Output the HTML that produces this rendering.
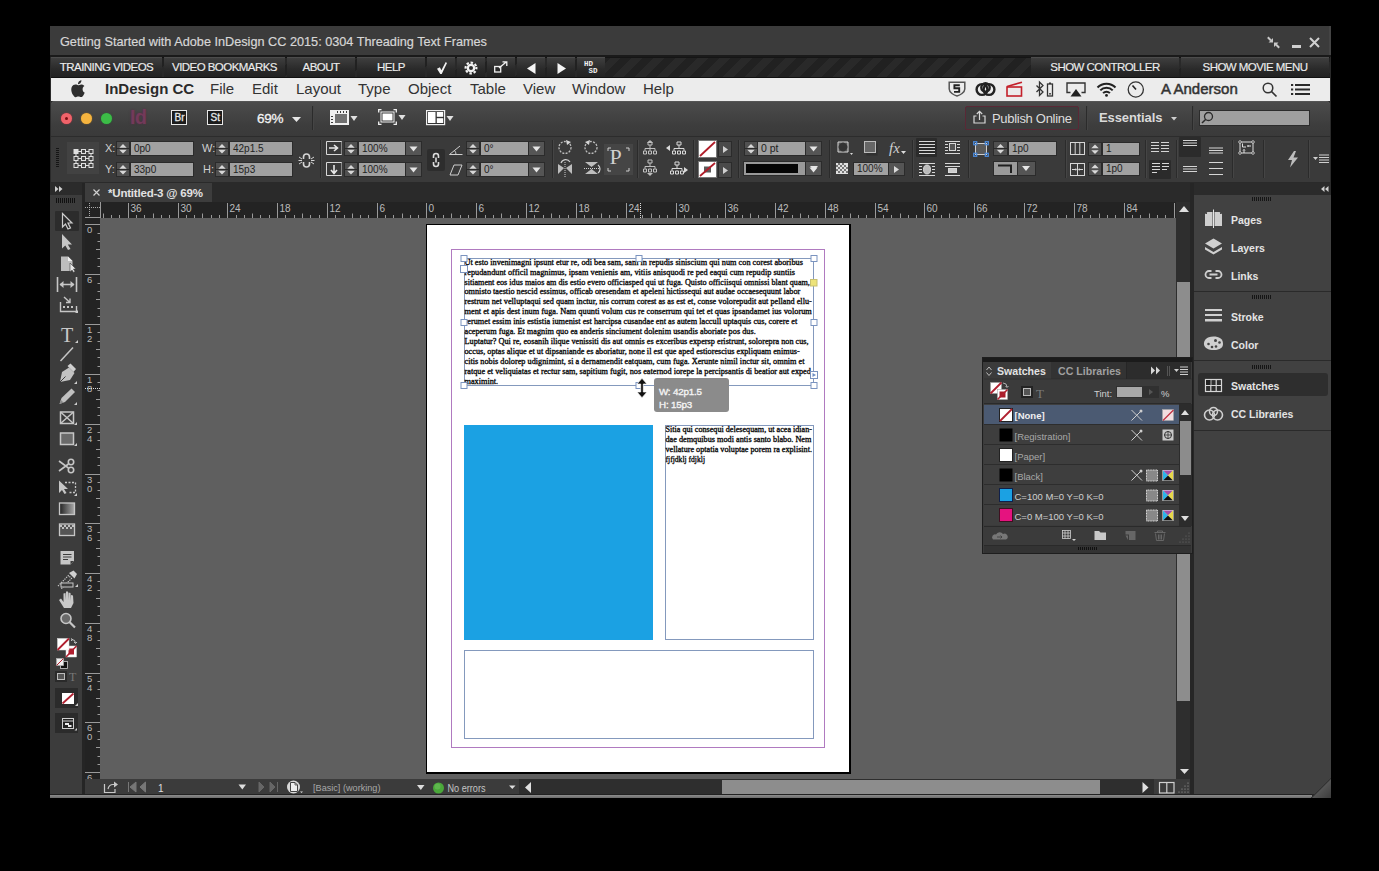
<!DOCTYPE html>
<html><head><meta charset="utf-8">
<style>
*{margin:0;padding:0;box-sizing:border-box}
html,body{width:1379px;height:871px;background:#000;overflow:hidden;font-family:"Liberation Sans",sans-serif;position:relative}
.a{position:absolute}
.t{position:absolute;white-space:nowrap;line-height:1}
svg{position:absolute;overflow:visible;z-index:1}
.nav{position:absolute;top:57px;height:20px;background:linear-gradient(#404040,#2a2a2a 60%,#222);color:#ececec;font-size:11.5px;letter-spacing:-0.55px;-webkit-text-stroke:0.15px #ececec;text-align:center;line-height:21px;box-shadow:inset 0 1px 0 #4c4c4c}
.ic{position:absolute;top:57px;height:20px;width:28px;background:linear-gradient(#404040,#2a2a2a 60%,#222);box-shadow:inset 0 1px 0 #4c4c4c}
.mi{position:absolute;top:81px;font-size:15px;color:#333;line-height:16px;white-space:nowrap}
.field{position:absolute;background:#a1a1a1;color:#222;font-size:10px;line-height:13px;padding-left:3px;box-shadow:0 0 0 1px #2b2b2b;white-space:nowrap}
.spin{position:absolute;background:linear-gradient(#505050 0 46%,#2b2b2b 46% 54%,#505050 54%);box-shadow:0 0 0 1px #2b2b2b}
.dd{position:absolute;background:#555;box-shadow:0 0 0 1px #2b2b2b}
.lbl{position:absolute;color:#d0d0d0;font-size:11px;line-height:11px;white-space:nowrap}
.sep{position:absolute;width:1px;background:#2b2b2b;box-shadow:1px 0 0 #454545}
</style></head><body>
<!-- window base -->
<div class="a" style="left:50px;top:26px;width:1281px;height:772px;background:#2a2a2a"></div>
<!-- title bar -->
<div class="a" style="left:50px;top:26px;width:1281px;height:30px;background:#3b3b3b;box-shadow:inset -2px 0 0 #444"></div><div class="a" style="left:50px;top:55px;width:1281px;height:2px;background:#1a1a1a"></div>
<div class="t" style="left:60px;top:35.8px;color:#d6d6d6;font-size:12.7px;-webkit-text-stroke:0.2px #d6d6d6">Getting Started with Adobe InDesign CC 2015: 0304 Threading Text Frames</div>
<svg style="left:1267px;top:37px" width="13" height="11" viewBox="0 0 13 11"><g fill="#c8c8c8"><path d="M6 5.5 V1 L1.5 5.5 Z M7 5.5 H11.5 L7 10 Z"/></g><path d="M0.8 0.3 L4 3.5 M12.2 10.7 L9 7.5" stroke="#c8c8c8" stroke-width="2"/></svg>
<div class="a" style="left:1292px;top:45px;width:9px;height:2.5px;background:#cfcfcf"></div>
<svg style="left:1309px;top:37px" width="11" height="11" viewBox="0 0 11 11"><path d="M1 1 L10 10 M10 1 L1 10" stroke="#d0d0d0" stroke-width="2"/></svg>
<!-- nav strip -->
<div class="a" style="left:51px;top:57px;width:1279px;height:21px;background:repeating-linear-gradient(135deg,#212121 0 7.8px,#292929 7.8px 15.5px);border-top:1px solid #151515;border-bottom:1px solid #111"></div>
<div class="nav" style="left:51px;width:111px">TRAINING VIDEOS</div>
<div class="nav" style="left:164px;width:121px">VIDEO BOOKMARKS</div>
<div class="nav" style="left:287px;width:68px">ABOUT</div>
<div class="nav" style="left:357px;width:68px">HELP</div>
<div class="ic" style="left:427px"></div>
<div class="ic" style="left:457px"></div>
<div class="ic" style="left:487px"></div>
<div class="ic" style="left:517px"></div>
<div class="ic" style="left:547px"></div>
<div class="ic" style="left:577px"></div>
<svg style="left:436.5px;top:62px" width="10" height="12" viewBox="0 0 11 13"><path d="M0 7.2 L3.2 5.8 L4.8 9 L9.6 0 L11 1 L5.2 13 H3.6 Z" fill="#f2f2f2"/></svg>
<svg style="left:464px;top:61px" width="14" height="14" viewBox="0 0 14 14"><circle cx="7" cy="7" r="4.3" fill="#f2f2f2"/><circle cx="7" cy="7" r="5.4" fill="none" stroke="#f2f2f2" stroke-width="2.2" stroke-dasharray="2.4 1.84" transform="rotate(-11 7 7)"/><circle cx="7" cy="7" r="2" fill="#2c2c2c"/></svg>
<svg style="left:494px;top:61px" width="14" height="12" viewBox="0 0 14 12"><g fill="none" stroke="#f2f2f2" stroke-width="1.3"><rect x="0.7" y="5.5" width="6" height="5.5"/><path d="M5 7 L12.5 0.8 M8.5 0.8 H12.8 V5"/></g></svg>
<svg style="left:527px;top:62.5px" width="9" height="11" viewBox="0 0 9 11"><path d="M8.5 0 V11 L0 5.5 Z" fill="#f4f4f4"/></svg>
<svg style="left:557px;top:62.5px" width="9" height="11" viewBox="0 0 9 11"><path d="M0.5 0 V11 L9 5.5 Z" fill="#f4f4f4"/></svg>
<div class="t" style="left:584px;top:61px;color:#f0f0f0;font-size:7.5px;font-weight:bold;line-height:7px;font-family:'Liberation Mono',monospace">HD<br>&nbsp;SD</div>
<div class="nav" style="left:1031px;width:148px">SHOW CONTROLLER</div>
<div class="nav" style="left:1181px;width:148px">SHOW MOVIE MENU</div>
<!-- menu bar -->
<div class="a" style="left:51px;top:78px;width:1279px;height:23px;background:#ececec"></div>
<svg style="left:71px;top:80px" width="14" height="17" viewBox="0 0 14 17"><path fill="#2e2e2e" d="M11.6 9.1c0-2 1.7-3 1.8-3.1-1-1.4-2.5-1.6-3-1.6-1.3-.1-2.5.8-3.2.8-.7 0-1.7-.8-2.8-.7C3 4.5 1.7 5.3 1 6.6c-1.5 2.6-.4 6.4 1.1 8.5.7 1 1.5 2.2 2.6 2.1 1-.04 1.4-.7 2.7-.7 1.2 0 1.6.7 2.7.6 1.1 0 1.8-1 2.5-2.1.8-1.2 1.1-2.300 1.100-2.400-.02 0-2.100-.8-2.100-3.200zM9.5 3c.6-.7 1-1.7.9-2.700-.8 0-1.900.6-2.500 1.300-.5.6-1 1.600-.9 2.600.9.1 1.900-.5 2.500-1.200z"/></svg>
<div class="mi" style="left:105px;font-weight:bold;color:#2a2a2a">InDesign CC</div>
<div class="mi" style="left:210px">File</div>
<div class="mi" style="left:252px">Edit</div>
<div class="mi" style="left:296px">Layout</div>
<div class="mi" style="left:358px">Type</div>
<div class="mi" style="left:408px">Object</div>
<div class="mi" style="left:470px">Table</div>
<div class="mi" style="left:523px">View</div>
<div class="mi" style="left:572px">Window</div>
<div class="mi" style="left:643px">Help</div>
<div class="mi" style="left:1161px;font-size:15px;top:81px;color:#333;-webkit-text-stroke:0.5px #333">A Anderson</div>
<!-- menu extras -->
<svg style="left:948px;top:81px" width="18" height="16" viewBox="0 0 18 16"><path d="M1.2 1.2 H16.8 V8 C16.8 11.5 12 14.2 9 15 C6 14.2 1.2 11.5 1.2 8 Z" fill="none" stroke="#555" stroke-width="1.5"/><path d="M11.8 4.2 H6.4 V7.3 H11.2 V10.9 H6" fill="none" stroke="#222" stroke-width="1.9"/></svg>
<svg style="left:975px;top:82px" width="21" height="15" viewBox="0 0 21 15"><g fill="none" stroke="#222" stroke-width="2.4"><circle cx="7" cy="7.5" r="5.4"/><circle cx="14" cy="7.5" r="5.4"/><circle cx="10.5" cy="5.5" r="4.2"/></g></svg>
<svg style="left:1006px;top:81px" width="18" height="16" viewBox="0 0 18 16"><g fill="none" stroke="#c4202a" stroke-width="1.6"><rect x="1" y="6" width="14.5" height="9"/><path d="M1 5.5 L16 1.2"/></g></svg>
<svg style="left:1035px;top:81px" width="20" height="16" viewBox="0 0 20 16"><path d="M1.5 4.5 L8 11 L4.5 14.5 V1 L8 4.5 L1.5 11" fill="none" stroke="#333" stroke-width="1.3"/><rect x="12.5" y="3" width="5" height="12" fill="none" stroke="#333" stroke-width="1.3"/><rect x="14" y="1.5" width="2" height="1.5" fill="#333"/><rect x="14.2" y="12" width="1.6" height="1.6" fill="#333"/></svg>
<svg style="left:1066px;top:82px" width="20" height="15" viewBox="0 0 20 15"><path d="M4.5 10.5 H1 V1 H19 V10.5 H15.5" fill="none" stroke="#333" stroke-width="1.4"/><path d="M10 7 L15.5 14.5 H4.5 Z" fill="#222"/></svg>
<svg style="left:1096px;top:82px" width="21" height="15" viewBox="0 0 21 15"><g fill="none" stroke="#222" stroke-width="2"><path d="M1.5 5.5 A12.5 12.5 0 0 1 19.5 5.5"/><path d="M4.3 8.4 A8.5 8.5 0 0 1 16.7 8.4"/><path d="M7.1 11.2 A4.5 4.5 0 0 1 13.9 11.2"/></g><circle cx="10.5" cy="13.4" r="1.4" fill="#222"/></svg>
<svg style="left:1127px;top:81px" width="18" height="17" viewBox="0 0 18 17"><circle cx="8.8" cy="8.5" r="7.6" fill="none" stroke="#333" stroke-width="1.3"/><path d="M5.5 4.5 L9 8.5" stroke="#222" stroke-width="1.7"/></svg>
<svg style="left:1262px;top:82px" width="16" height="16" viewBox="0 0 16 16"><circle cx="6" cy="6" r="4.8" fill="none" stroke="#333" stroke-width="1.5"/><path d="M9.5 9.5 L14.5 14.5" stroke="#333" stroke-width="1.7"/></svg>
<svg style="left:1291px;top:84px" width="19" height="11" viewBox="0 0 19 11"><g fill="#2a2a2a"><rect x="0" y="0" width="2.2" height="2"/><rect x="0" y="4.5" width="2.2" height="2"/><rect x="0" y="9" width="2.2" height="2"/><rect x="4" y="0" width="15" height="2"/><rect x="4" y="4.5" width="15" height="2"/><rect x="4" y="9" width="15" height="2"/></g></svg>

<!-- app bar -->
<div class="a" style="left:51px;top:101px;width:1279px;height:35px;background:linear-gradient(#4c4c4c,#3d3d3d 70%,#3a3a3a);border-radius:4px 4px 0 0;box-shadow:inset 0 1px 0 #555"></div>
<div class="a" style="left:61px;top:113px;width:11px;height:11px;border-radius:50%;background:#f0636a;box-shadow:0 0 1.5px #b03040"></div>
<div class="a" style="left:65px;top:117px;width:3px;height:3px;border-radius:50%;background:#7a0e12"></div>
<div class="a" style="left:81px;top:113px;width:11px;height:11px;border-radius:50%;background:#f5b43f;box-shadow:0 0 1.5px #a07020"></div>
<div class="a" style="left:101px;top:113px;width:11px;height:11px;border-radius:50%;background:#3cbc47;box-shadow:0 0 1.5px #207030"></div>
<div class="t" style="left:130px;top:108px;font-size:19.5px;font-weight:bold;color:#733a5a;letter-spacing:-0.3px;text-shadow:0 0 2px #5a2a45">Id</div>
<div class="a" style="left:171px;top:110px;width:16px;height:15px;border:1.3px solid #e8e8e8;background:#1c1c1c"></div>
<div class="t" style="left:174.5px;top:112.5px;font-size:10px;color:#e6e6e6;-webkit-text-stroke:0.3px #e6e6e6">Br</div>
<div class="a" style="left:207px;top:110px;width:16px;height:15px;border:1.3px solid #e8e8e8;background:#1c1c1c"></div>
<div class="t" style="left:210.5px;top:112.5px;font-size:10px;color:#e6e6e6;-webkit-text-stroke:0.3px #e6e6e6">St</div>
<div class="t" style="left:257px;top:112px;font-size:13.5px;color:#f2f2f2;letter-spacing:-0.3px;-webkit-text-stroke:0.3px #f2f2f2">69%</div>
<svg style="left:292px;top:117px" width="9" height="5" viewBox="0 0 9 5"><path d="M0 0 H9 L4.5 5 Z" fill="#e6e6e6"/></svg>
<div class="sep" style="left:312px;top:106px;height:24px"></div>
<svg style="left:330px;top:110px" width="28" height="15" viewBox="0 0 28 15"><rect x="0" y="0" width="19" height="15" fill="#f0f0f0"/><rect x="5" y="4" width="12" height="9" fill="#707070"/><g fill="#3b3b3b"><rect x="7" y="1" width="1" height="2"/><rect x="10" y="1" width="1" height="2"/><rect x="13" y="1" width="1" height="2"/><rect x="16" y="1" width="1" height="2"/><rect x="1" y="6" width="2" height="1"/><rect x="1" y="9" width="2" height="1"/><rect x="1" y="12" width="2" height="1"/></g><path d="M20.5 6 H27.5 L24 11 Z" fill="#e0e0e0"/></svg>
<svg style="left:378px;top:109px" width="29" height="16" viewBox="0 0 29 16"><g fill="none" stroke="#f0f0f0" stroke-width="1.3"><path d="M0.7 3.5 V0.7 H3.5 M15.5 0.7 H18.3 V3.5 M18.3 12.5 V15.3 H15.5 M3.5 15.3 H0.7 V12.5"/></g><rect x="2.5" y="2.5" width="14" height="11" fill="#f4f4f4"/><rect x="4" y="4" width="11" height="8" fill="#fff" stroke="#3a3a3a" stroke-width="1"/><rect x="5" y="5" width="9" height="6" fill="#fff"/><path d="M20.5 6 H27.5 L24 11 Z" fill="#e0e0e0"/></svg>
<svg style="left:426px;top:110px" width="28" height="15" viewBox="0 0 28 15"><rect x="0.6" y="0.6" width="18" height="14" fill="#333" stroke="#f0f0f0" stroke-width="1.2"/><rect x="2" y="2" width="7.5" height="11" fill="#fff"/><rect x="10.8" y="2" width="6.4" height="4.8" fill="#fff"/><rect x="10.8" y="8.2" width="6.4" height="4.8" fill="#fff"/><path d="M20.5 6 H27.5 L24 11 Z" fill="#e0e0e0"/></svg>

<div class="a" style="left:965px;top:106px;width:114px;height:24px;border:1px solid #5a2836;background:#3d3d3d;border-radius:2px"></div>
<svg style="left:973px;top:110px" width="13" height="14" viewBox="0 0 13 14"><g fill="none" stroke="#d8d8d8" stroke-width="1.2"><path d="M3.5 6 H1 V13 H12 V6 H9.5"/><path d="M6.5 10 V1.5 M3.8 4 L6.5 1.3 L9.2 4"/></g></svg>
<div class="t" style="left:992px;top:112px;font-size:13px;color:#dcdcdc;letter-spacing:-0.3px">Publish Online</div>
<div class="sep" style="left:1086px;top:106px;height:24px"></div>
<div class="t" style="left:1099px;top:111px;font-size:13px;font-weight:bold;color:#dadada;letter-spacing:-0.1px">Essentials</div>
<svg style="left:1171px;top:117px" width="6" height="4" viewBox="0 0 6 4"><path d="M0 0 H6 L3 3.5 Z" fill="#cfcfcf"/></svg>
<div class="sep" style="left:1192px;top:106px;height:24px"></div>
<div class="a" style="left:1199px;top:110px;width:111px;height:16px;background:#9f9f9f;border:1px solid #2c2c2c"></div>
<svg style="left:1201px;top:111px" width="13" height="13" viewBox="0 0 13 13"><circle cx="7.5" cy="5.5" r="4" fill="none" stroke="#2a2a2a" stroke-width="1.3"/><path d="M4.8 8.2 L1 12" stroke="#2a2a2a" stroke-width="1.5"/></svg>


<!-- control panel -->
<div class="a" style="left:51px;top:136px;width:1279px;height:46px;background:#3a3a3a;border-top:1px solid #2c2c2c"></div>
<!-- gripper -->
<div class="a" style="left:56px;top:148px;width:3px;height:20px;background:repeating-linear-gradient(#151515 0 1px,transparent 1px 2px)"></div>
<!-- reference point -->
<div class="a" style="left:67px;top:142px;width:32px;height:32px;background:#424242"></div>
<svg style="left:73px;top:149px" width="21" height="19" viewBox="0 0 21 19"><g fill="none" stroke="#e0e0e0" stroke-width="1"><rect x="1" y="0.5" width="4" height="4" fill="#e0e0e0"/><rect x="8.5" y="0.5" width="4" height="4"/><rect x="16" y="0.5" width="4" height="4"/><rect x="1" y="7.5" width="4" height="4"/><rect x="8.5" y="7.5" width="4" height="4"/><rect x="16" y="7.5" width="4" height="4"/><rect x="1" y="14.5" width="4" height="4"/><rect x="8.5" y="14.5" width="4" height="4"/><rect x="16" y="14.5" width="4" height="4"/><path d="M5 2.5 H8.5 M12.5 2.5 H16 M5 9.5 H8.5 M12.5 9.5 H16 M5 16.5 H8.5 M12.5 16.5 H16 M3 4.5 V7.5 M3 11.5 V14.5 M18 4.5 V7.5 M18 11.5 V14.5"/></g></svg>
<div class="lbl" style="left:105px;top:143px">X:</div>
<div class="lbl" style="left:105px;top:164px">Y:</div>
<div class="lbl" style="left:202px;top:143px">W:</div>
<div class="lbl" style="left:203px;top:164px">H:</div>
<!-- spinners -->
<div class="spin" style="left:117px;top:142px;width:12px;height:13px"></div>
<div class="spin" style="left:117px;top:163px;width:12px;height:13px"></div>
<div class="spin" style="left:216px;top:142px;width:12px;height:13px"></div>
<div class="spin" style="left:216px;top:163px;width:12px;height:13px"></div>
<div class="spin" style="left:345px;top:142px;width:12px;height:13px"></div>
<div class="spin" style="left:345px;top:163px;width:12px;height:13px"></div>
<div class="spin" style="left:467px;top:142px;width:12px;height:13px"></div>
<div class="spin" style="left:467px;top:163px;width:12px;height:13px"></div>
<div class="spin" style="left:745px;top:142px;width:12px;height:13px"></div>
<div class="spin" style="left:994px;top:142px;width:13px;height:13px"></div>
<div class="spin" style="left:1089px;top:143px;width:12px;height:12px"></div>
<div class="spin" style="left:1089px;top:163px;width:12px;height:12px"></div>
<svg style="left:0;top:0" width="1379" height="200" viewBox="0 0 1379 200"><g fill="#d8d8d8">
<path id="sp" d="M119.3 147.8 L123 144 L126.7 147.8 Z M119.3 149.8 L126.7 149.8 L123 153.6 Z"/>
<use href="#sp" y="21"/><use href="#sp" x="99"/><use href="#sp" x="99" y="21"/>
<use href="#sp" x="228"/><use href="#sp" x="228" y="21"/><use href="#sp" x="350"/><use href="#sp" x="350" y="21"/>
<use href="#sp" x="628"/><use href="#sp" x="877.5"/><use href="#sp" x="972" y="0.5"/><use href="#sp" x="972" y="20.5"/>
</g></svg>
<!-- fields -->
<div class="field" style="left:131px;top:142px;width:62px;height:13px">0p0</div>
<div class="field" style="left:131px;top:163px;width:62px;height:13px">33p0</div>
<div class="field" style="left:230px;top:142px;width:62px;height:13px">42p1.5</div>
<div class="field" style="left:230px;top:163px;width:62px;height:13px">15p3</div>
<svg style="left:298px;top:153px" width="17" height="15" viewBox="0 0 17 15"><g fill="none" stroke="#d4d4d4" stroke-width="1.6"><path d="M5.5 6 V4 A3 3 0 0 1 11.5 4 V6 M5.5 9 V11 A3 3 0 0 0 11.5 11 V9"/></g><g stroke="#d4d4d4" stroke-width="1"><path d="M1 4 L4 6 M0.5 7.5 H4 M1 11 L4 9 M16 4 L13 6 M16.5 7.5 H13 M16 11 L13 9"/></g></svg>
<div class="sep" style="left:320px;top:140px;height:38px"></div>
<!-- scale icons -->
<svg style="left:326px;top:141px" width="16" height="36" viewBox="0 0 16 36"><g fill="none" stroke="#d8d8d8" stroke-width="1"><path d="M15.5 0.5 H0.5 V13.5 H15.5" /><path d="M15.5 0.5 V13.5" stroke-dasharray="1 1"/><path d="M15.5 21.5 H0.5 V34.5 H15.5"/><path d="M15.5 21.5 V34.5" stroke-dasharray="1 1"/></g><path d="M3 7 H11 M8 4 L11.5 7 L8 10" fill="none" stroke="#e8e8e8" stroke-width="1.6"/><path d="M8 24 V32 M5 29 L8 32.5 L11 29" fill="none" stroke="#e8e8e8" stroke-width="1.6"/></svg>
<div class="field" style="left:359px;top:142px;width:46px;height:13px">100%</div>
<div class="field" style="left:359px;top:163px;width:46px;height:13px">100%</div>
<div class="dd" style="left:406px;top:142px;width:15px;height:13px"></div>
<div class="dd" style="left:406px;top:163px;width:15px;height:13px"></div>
<div class="a" style="left:427px;top:149px;width:18px;height:22px;background:#2d2d2d;border-radius:2px"></div>
<svg style="left:430px;top:152px" width="12" height="16" viewBox="0 0 12 16"><g fill="none" stroke="#dcdcdc" stroke-width="1.6"><path d="M3.5 6 V4 A2.5 2.5 0 0 1 8.5 4 V6 M3.5 10 V12 A2.5 2.5 0 0 0 8.5 12 V10 M6 5.5 V10.5"/></g></svg>
<svg style="left:449px;top:142px" width="14" height="35" viewBox="0 0 14 35"><g fill="none" stroke="#cfcfcf" stroke-width="1"><path d="M0.5 12.5 H13.5 M0.5 12.5 L11 4 M7 12.5 A6 6 0 0 0 5.5 8.5" /><path d="M1 33 L5 23 H13 L9 33 Z"/></g></svg>
<div class="field" style="left:481px;top:142px;width:47px;height:13px">0°</div>
<div class="field" style="left:481px;top:163px;width:47px;height:13px">0°</div>
<div class="dd" style="left:529px;top:142px;width:15px;height:13px"></div>
<div class="dd" style="left:529px;top:163px;width:15px;height:13px"></div>
<svg style="left:0;top:0" width="1379" height="200" viewBox="0 0 1379 200"><g fill="#e6e6e6"><path id="dt" d="M409.5 146.5 H417.5 L413.5 151.5 Z"/><use href="#dt" y="21"/><use href="#dt" x="123"/><use href="#dt" x="123" y="21"/><use href="#dt" x="400"/><use href="#dt" x="400" y="21"/></g></svg>
<div class="sep" style="left:552px;top:140px;height:38px"></div>
<!-- rotate/flip -->
<svg style="left:557px;top:140px" width="45" height="38" viewBox="0 0 45 38"><g fill="none" stroke="#bdbdbd" stroke-width="1.3" stroke-dasharray="2 1.3"><circle cx="8" cy="7.5" r="6"/><circle cx="34" cy="7.5" r="6"/></g><path d="M9 0 L14 2 L10 5 Z M33 0 L28 2 L32 5 Z" fill="#d6d6d6"/><g fill="#bdbdbd"><path d="M1 24 L7 28 L1 34 Z M15 24 L9 28 L15 34 Z"/><path d="M28 22 H41 L34.5 27 Z M28 34 H41 L34.5 29 Z"/></g><path d="M8 22 V37 M27 28.5 H42" stroke="#cfcfcf" stroke-dasharray="1 1"/><path d="M4 23 A5 5 0 0 1 13 22" fill="none" stroke="#cfcfcf" stroke-width="1.2"/><path d="M41 25 A5 5 0 0 1 41 33" fill="none" stroke="#cfcfcf" stroke-width="1.2"/></svg>
<div class="a" style="left:604px;top:144px;width:29px;height:31px;background:#454545"></div>
<svg style="left:604px;top:144px" width="29" height="31" viewBox="0 0 29 31"><path d="M4 7 V4 H7 M22 4 H25 V7 M25 24 V27 H22 M7 27 H4 V24" fill="none" stroke="#cfcfcf" stroke-width="1"/></svg>
<div class="t" style="left:609.5px;top:146px;font-family:'Liberation Serif',serif;font-size:22px;color:#d0d0d0">P</div>
<div class="sep" style="left:637px;top:140px;height:38px"></div>
<svg style="left:642px;top:140px" width="46" height="38" viewBox="0 0 46 38"><g fill="none" stroke="#c0c0c0" stroke-width="1"><path d="M8 5 V8 M3 10.5 V8.5 H13 V10.5 M8 8.5 V10.5 M1.5 11 H4.5 V14 H1.5 Z M6.5 11 H9.5 V14 H6.5 Z M11.5 11 H14.5 V14 H11.5 Z M6 2 H10 V5 H6 Z"/></g><path d="M5 3 L8 0 L11 3 Z" fill="#bdbdbd"/>
<g transform="translate(0,20)" fill="none" stroke="#c0c0c0" stroke-width="1"><path d="M8 3 V6 M3 8.5 V6.5 H13 V8.5 M1.5 9 H4.5 V12 H1.5 Z M6.5 9 H9.5 V12 H6.5 Z M11.5 9 H14.5 V12 H11.5 Z M6 0 H10 V3 H6 Z"/></g><path d="M5 33 L8 36 L11 33 Z" fill="#bdbdbd"/>
<g transform="translate(28,2)" fill="none" stroke="#dadada" stroke-width="1"><path d="M9 3 V6 M4 8.5 V6.5 H14 V8.5 M2.5 9 H5.5 V12 H2.5 Z M7.5 9 H10.5 V12 H7.5 Z M12.5 9 H15.5 V12 H12.5 Z M7 0 H11 V3 H7 Z"/></g><path d="M24 8 L28 5 V11 Z" fill="#dadada"/>
<g transform="translate(26,22)" fill="none" stroke="#dadada" stroke-width="1"><path d="M9 3 V6 M4 8.5 V6.5 H14 V8.5 M2.5 9 H5.5 V12 H2.5 Z M7.5 9 H10.5 V12 H7.5 Z M12.5 9 H15.5 V12 H12.5 Z M7 0 H11 V3 H7 Z"/></g><path d="M46 30 L42 27 V33 Z" fill="#dadada"/></svg>
<div class="sep" style="left:693px;top:140px;height:38px"></div>
<!-- fill/stroke -->
<div class="a" style="left:699px;top:141px;width:17px;height:16px;background:#fff;box-shadow:0 0 0 1px #777"></div>
<svg style="left:699px;top:141px" width="17" height="16" viewBox="0 0 17 16"><path d="M1 15 L16 1" stroke="#b01e2a" stroke-width="1.8"/></svg>
<div class="a" style="left:699px;top:162px;width:17px;height:15px;background:#fff;box-shadow:0 0 0 1px #777"></div>
<svg style="left:699px;top:162px" width="17" height="15" viewBox="0 0 17 15"><rect x="5" y="4.5" width="7" height="6" fill="#5b5b5b"/><path d="M1 14 L16 1" stroke="#b01e2a" stroke-width="1.8"/></svg>
<div class="dd" style="left:719px;top:142px;width:12px;height:14px;background:#4a4a4a"></div>
<div class="dd" style="left:719px;top:163px;width:12px;height:14px;background:#4a4a4a"></div>
<svg style="left:723px;top:145.5px" width="5" height="30" viewBox="0 0 5 30"><path d="M0 0 L5 3.5 L0 7 Z M0 21 L5 24.5 L0 28 Z" fill="#d0d0d0"/></svg>
<div class="sep" style="left:738px;top:140px;height:38px"></div>
<div class="field" style="left:758px;top:142px;width:47px;height:13px;font-size:10.5px">0 pt</div>
<div class="dd" style="left:806px;top:142px;width:15px;height:13px"></div>
<div class="a" style="left:744px;top:162px;width:61px;height:13px;background:#999;box-shadow:0 0 0 1px #2b2b2b"></div>
<div class="a" style="left:746px;top:164px;width:52px;height:9px;background:#060606"></div>
<div class="dd" style="left:806px;top:162px;width:15px;height:13px"></div>
<svg style="left:810px;top:166px" width="8" height="5" viewBox="0 0 8 5"><path d="M0 0 H8 L4 5 Z" fill="#e6e6e6"/></svg>
<div class="sep" style="left:829px;top:140px;height:38px"></div>
<!-- corner/effects -->
<svg style="left:837px;top:141px" width="17" height="15" viewBox="0 0 17 15"><path d="M1 1 H11 V11 H1 Z" fill="#555" stroke="#d8d8d8" stroke-width="1"/><path d="M3 3 Q6 0 9 3 Q12 6 9 9 Q6 12 3 9 Q0 6 3 3" fill="#333"/><path d="M13 12 H16 L14.5 14 Z" fill="#d8d8d8"/></svg>
<svg style="left:864px;top:141px" width="14" height="15" viewBox="0 0 14 15"><rect x="2.5" y="2.5" width="11" height="12" fill="#2c2c2c" opacity=".7"/><rect x="0.5" y="0.5" width="11" height="11" fill="#666" stroke="#bbb"/></svg>
<div class="t" style="left:889px;top:141px;font-family:'Liberation Serif',serif;font-style:italic;font-size:15px;color:#d0d0d0">fx</div>
<svg style="left:901px;top:151px" width="5" height="4" viewBox="0 0 5 4"><path d="M0 0 H5 L2.5 3 Z" fill="#ddd"/></svg>
<svg style="left:836px;top:163px" width="12" height="11" viewBox="0 0 12 11"><rect width="12" height="11" fill="#e0e0e0"/><g fill="#777"><rect x="2" y="0" width="2" height="2"/><rect x="6" y="0" width="2" height="2"/><rect x="0" y="2" width="2" height="2"/><rect x="4" y="2" width="2" height="2"/><rect x="8" y="2" width="2" height="2"/><rect x="2" y="4" width="2" height="2"/><rect x="6" y="4" width="2" height="2"/><rect x="10" y="4" width="2" height="2"/><rect x="0" y="6" width="2" height="2"/><rect x="4" y="6" width="2" height="2"/><rect x="8" y="6" width="2" height="2"/><rect x="2" y="8" width="2" height="2"/><rect x="6" y="8" width="2" height="2"/><rect x="10" y="8" width="2" height="2"/></g></svg>
<div class="field" style="left:854px;top:163px;width:34px;height:12px;font-size:10px;line-height:12px">100%</div>
<div class="dd" style="left:889px;top:163px;width:15px;height:12px"></div>
<svg style="left:894px;top:165.5px" width="5" height="7" viewBox="0 0 5 7"><path d="M0 0 L5 3.5 L0 7 Z" fill="#dadada"/></svg>
<div class="sep" style="left:912px;top:140px;height:38px"></div>
<!-- text wrap -->
<div class="a" style="left:916px;top:138px;width:21px;height:19px;background:#2b2b2b;border-radius:1px"></div>
<svg style="left:917px;top:140px" width="46" height="37" viewBox="0 0 46 37"><g stroke="#d8d8d8" stroke-width="1"><path d="M2 1.5 H18 M2 4.5 H18 M2 7.5 H18 M2 10.5 H18 M2 13.5 H18"/><path d="M28 1.5 H43 M28 13.5 H43 M28 4.5 H31 M40 4.5 H43 M28 7.5 H31 M40 7.5 H43 M28 10.5 H31 M40 10.5 H43"/><rect x="32.5" y="3.5" width="6" height="7" fill="#555"/>
<path d="M2 23.5 H18 M2 35.5 H18 M2 26.5 H5 M15 26.5 H18 M2 29.5 H5 M15 29.5 H18 M2 32.5 H5 M15 32.5 H18"/><ellipse cx="10" cy="29.5" rx="3.5" ry="4.5" fill="#bbb"/>
<path d="M28 23.5 H43 M28 35.5 H43 M28 26.5 H43"/><rect x="31.5" y="28.5" width="8" height="4" fill="#ccc"/></g></svg>
<div class="sep" style="left:968px;top:140px;height:38px"></div>
<!-- frame fitting -->
<svg style="left:973px;top:141px" width="16" height="16" viewBox="0 0 16 16"><rect x="2.5" y="2.5" width="11" height="11" fill="#5a5a5a" stroke="#cfcfcf" stroke-width="1"/><g fill="none" stroke="#4a88d8" stroke-width="1.3"><rect x="0.7" y="0.7" width="3" height="3"/><rect x="12.3" y="0.7" width="3" height="3"/><rect x="0.7" y="12.3" width="3" height="3"/><rect x="12.3" y="12.3" width="3" height="3"/></g></svg>
<div class="field" style="left:1009px;top:142px;width:47px;height:13px">1p0</div>
<div class="a" style="left:994px;top:162px;width:41px;height:13px;background:#9a9a9a;box-shadow:0 0 0 1px #2b2b2b"></div>
<svg style="left:997px;top:164px" width="17" height="9" viewBox="0 0 17 9"><path d="M1 1.5 H14 V9" fill="none" stroke="#1f1f1f" stroke-width="2"/></svg>
<div class="dd" style="left:1018px;top:162px;width:17px;height:13px"></div>
<svg style="left:1022px;top:166px" width="8" height="5" viewBox="0 0 8 5"><path d="M0 0 H8 L4 5 Z" fill="#e6e6e6"/></svg>
<div class="sep" style="left:1065px;top:140px;height:38px"></div>
<!-- columns -->
<svg style="left:1070px;top:142px" width="15" height="34" viewBox="0 0 15 34"><g fill="none" stroke="#d6d6d6" stroke-width="1"><rect x="0.5" y="0.5" width="14" height="12"/><path d="M5.2 0.5 V12.5 M9.8 0.5 V12.5"/><rect x="0.5" y="21.5" width="14" height="12"/><path d="M7.5 21.5 V33.5 M2 27.5 H6 M9 27.5 H13"/></g><path d="M5.5 26 L7 27.5 L5.5 29 Z M9.5 26 L8 27.5 L9.5 29 Z" fill="#d6d6d6"/></svg>
<div class="field" style="left:1103px;top:143px;width:36px;height:12px;line-height:12px">1</div>
<div class="field" style="left:1103px;top:163px;width:36px;height:12px;line-height:12px">1p0</div>
<div class="sep" style="left:1145px;top:140px;height:38px"></div>
<div class="a" style="left:1149px;top:160px;width:22px;height:19px;background:#2b2b2b;border-radius:1px"></div>
<svg style="left:1151px;top:141px" width="19" height="33" viewBox="0 0 19 33"><g stroke="#d6d6d6" stroke-width="1"><path d="M0 1.5 H8 M0 4.5 H8 M0 7.5 H8 M0 10.5 H8 M10 1.5 H18 M10 4.5 H18 M10 7.5 H18 M10 10.5 H18"/><path d="M1 22.5 H9 M1 25.5 H9 M1 28.5 H9 M1 31.5 H6 M11 22.5 H18 M11 25.5 H18 M11 28.5 H16"/></g></svg>
<div class="sep" style="left:1176px;top:140px;height:38px"></div>
<div class="a" style="left:1179px;top:137px;width:22px;height:20px;background:#2b2b2b;border-radius:1px"></div>
<svg style="left:1182px;top:139px" width="40" height="38" viewBox="0 0 40 38"><g stroke="#d6d6d6" stroke-width="1"><path d="M1 1.5 H15 M1 4 H15 M1 6.5 H15"/><path d="M27 9 H41 M27 11.5 H41 M27 14 H41"/><path d="M1 27.5 H15 M1 30 H15 M1 32.5 H15"/><path d="M27 23.5 H41 M27 29.5 H41 M27 35.5 H41"/></g></svg>
<div class="sep" style="left:1232px;top:140px;height:38px"></div>
<svg style="left:1238px;top:140px" width="17" height="15" viewBox="0 0 17 15"><rect x="2" y="2" width="13" height="11" fill="none" stroke="#dadada" stroke-width="1"/><g fill="#2c2c2c" stroke="#dadada" stroke-width="0.8"><circle cx="2" cy="2" r="1.3"/><circle cx="15" cy="2" r="1.3"/><circle cx="2" cy="13" r="1.3"/><circle cx="15" cy="13" r="1.3"/></g><path d="M4.5 3.5 V7 H8 M13 6 H9.5 M10.5 5 L9.5 6 L10.5 7 M6 13 V9.5 M5 10.5 L6 9.5 L7 10.5" fill="none" stroke="#eee" stroke-width="0.9"/></svg>
<div class="sep" style="left:1263px;top:140px;height:38px"></div>
<svg style="left:1287px;top:151px" width="12" height="17" viewBox="0 0 12 17"><path d="M7 0 L1 9 H5 L3 16.5 L11 6.5 H6.5 L9 0 Z" fill="#bdbdbd"/></svg>
<div class="sep" style="left:1308px;top:140px;height:38px"></div>
<svg style="left:1313px;top:154px" width="16" height="10" viewBox="0 0 16 10"><path d="M0 3 H5 L2.5 6 Z" fill="#cfcfcf"/><g stroke="#cfcfcf" stroke-width="1.1"><path d="M6 1 H16 M6 3.5 H16 M6 6 H16 M6 8.5 H16"/></g></svg>


<!-- tab bar etc -->
<div class="a" style="left:50px;top:182px;width:1281px;height:20px;background:#2a2a2a"></div>
<!-- WS1 -->
<div class="a" style="left:50px;top:183px;width:32px;height:12px;background:#2b2b2b"></div>
<svg style="left:55px;top:186px" width="8" height="6" viewBox="0 0 8 6"><path d="M0 0 L3.5 3 L0 6 Z M4 0 L7.5 3 L4 6 Z" fill="#cfcfcf"/></svg>
<div class="a" style="left:50px;top:195px;width:32px;height:584px;background:#3c3c3c"></div>
<div class="a" style="left:56px;top:198px;width:20px;height:5px;background:repeating-linear-gradient(90deg,#111 0 1px,transparent 1px 2px)"></div>
<div class="a" style="left:85px;top:183px;width:127px;height:19px;background:#3d3d3d"></div>
<svg style="left:92.5px;top:189px" width="7" height="7" viewBox="0 0 7 7"><path d="M0.5 0.5 L6.5 6.5 M6.5 0.5 L0.5 6.5" stroke="#d0d0d0" stroke-width="1.2"/></svg>
<div class="t" style="left:108px;top:188px;font-size:11.5px;font-weight:bold;color:#e2e2e2;letter-spacing:-0.2px">*Untitled-3 @ 69%</div>
<div class="a" style="left:1194px;top:183px;width:137px;height:12px;background:#2b2b2b"></div>
<svg style="left:1321px;top:186px" width="8" height="6" viewBox="0 0 8 6"><path d="M3.5 0 L0 3 L3.5 6 Z M7.5 0 L4 3 L7.5 6 Z" fill="#cfcfcf"/></svg>
<div class="a" style="left:85px;top:202px;width:1091px;height:16px;background:#232323"></div>
<div class="a" style="left:85px;top:218px;width:15px;height:561px;background:#232323"></div>
<div class="a" style="left:100px;top:218px;width:1076px;height:561px;background:#5f5f5f"></div>
<svg style="left:0;top:0;z-index:1" width="1379" height="871" viewBox="0 0 1379 871"><g stroke="#9a9a9a" stroke-width="1"><path d="M103.5 213.5 V218 M111.5 215 V218 M119.5 215 V218 M128.5 203 V218 M136.5 215 V218 M144.5 215 V218 M153.5 213.5 V218 M161.5 215 V218 M169.5 215 V218 M178.5 203 V218 M186.5 215 V218 M194.5 215 V218 M202.5 213.5 V218 M211.5 215 V218 M219.5 215 V218 M227.5 203 V218 M236.5 215 V218 M244.5 215 V218 M252.5 213.5 V218 M260.5 215 V218 M269.5 215 V218 M277.5 203 V218 M285.5 215 V218 M294.5 215 V218 M302.5 213.5 V218 M310.5 215 V218 M319.5 215 V218 M327.5 203 V218 M335.5 215 V218 M344.5 215 V218 M352.5 213.5 V218 M360.5 215 V218 M368.5 215 V218 M377.5 203 V218 M385.5 215 V218 M393.5 215 V218 M402.5 213.5 V218 M410.5 215 V218 M418.5 215 V218 M426.5 203 V218 M435.5 215 V218 M443.5 215 V218 M451.5 213.5 V218 M460.5 215 V218 M468.5 215 V218 M476.5 203 V218 M485.5 215 V218 M493.5 215 V218 M501.5 213.5 V218 M510.5 215 V218 M518.5 215 V218 M526.5 203 V218 M534.5 215 V218 M543.5 215 V218 M551.5 213.5 V218 M559.5 215 V218 M568.5 215 V218 M576.5 203 V218 M584.5 215 V218 M592.5 215 V218 M601.5 213.5 V218 M609.5 215 V218 M617.5 215 V218 M626.5 203 V218 M634.5 215 V218 M642.5 215 V218 M651.5 213.5 V218 M659.5 215 V218 M667.5 215 V218 M676.5 203 V218 M684.5 215 V218 M692.5 215 V218 M700.5 213.5 V218 M709.5 215 V218 M717.5 215 V218 M725.5 203 V218 M734.5 215 V218 M742.5 215 V218 M750.5 213.5 V218 M758.5 215 V218 M767.5 215 V218 M775.5 203 V218 M783.5 215 V218 M792.5 215 V218 M800.5 213.5 V218 M808.5 215 V218 M817.5 215 V218 M825.5 203 V218 M833.5 215 V218 M842.5 215 V218 M850.5 213.5 V218 M858.5 215 V218 M866.5 215 V218 M875.5 203 V218 M883.5 215 V218 M891.5 215 V218 M900.5 213.5 V218 M908.5 215 V218 M916.5 215 V218 M924.5 203 V218 M933.5 215 V218 M941.5 215 V218 M949.5 213.5 V218 M958.5 215 V218 M966.5 215 V218 M974.5 203 V218 M983.5 215 V218 M991.5 215 V218 M999.5 213.5 V218 M1007.5 215 V218 M1016.5 215 V218 M1024.5 203 V218 M1032.5 215 V218 M1041.5 215 V218 M1049.5 213.5 V218 M1057.5 215 V218 M1066.5 215 V218 M1074.5 203 V218 M1082.5 215 V218 M1090.5 215 V218 M1099.5 213.5 V218 M1107.5 215 V218 M1115.5 215 V218 M1124.5 203 V218 M1132.5 215 V218 M1140.5 215 V218 M1149.5 213.5 V218 M1157.5 215 V218 M1165.5 215 V218 M1174.5 203 V218 M85 224.5 H100 M97.5 233.5 H100 M97.5 241.5 H100 M96 249.5 H100 M97.5 258.5 H100 M97.5 266.5 H100 M85 274.5 H100 M97.5 283.5 H100 M97.5 291.5 H100 M96 299.5 H100 M97.5 308.5 H100 M97.5 316.5 H100 M85 324.5 H100 M97.5 332.5 H100 M97.5 341.5 H100 M96 349.5 H100 M97.5 357.5 H100 M97.5 366.5 H100 M85 374.5 H100 M97.5 382.5 H100 M97.5 390.5 H100 M96 399.5 H100 M97.5 407.5 H100 M97.5 415.5 H100 M85 424.5 H100 M97.5 432.5 H100 M97.5 440.5 H100 M96 449.5 H100 M97.5 457.5 H100 M97.5 465.5 H100 M85 474.5 H100 M97.5 482.5 H100 M97.5 490.5 H100 M96 498.5 H100 M97.5 507.5 H100 M97.5 515.5 H100 M85 523.5 H100 M97.5 532.5 H100 M97.5 540.5 H100 M96 548.5 H100 M97.5 556.5 H100 M97.5 565.5 H100 M85 573.5 H100 M97.5 581.5 H100 M97.5 590.5 H100 M96 598.5 H100 M97.5 606.5 H100 M97.5 615.5 H100 M85 623.5 H100 M97.5 631.5 H100 M97.5 640.5 H100 M96 648.5 H100 M97.5 656.5 H100 M97.5 664.5 H100 M85 673.5 H100 M97.5 681.5 H100 M97.5 689.5 H100 M96 698.5 H100 M97.5 706.5 H100 M97.5 714.5 H100 M85 722.5 H100 M97.5 731.5 H100 M97.5 739.5 H100 M96 747.5 H100 M97.5 756.5 H100 M97.5 764.5 H100 M85 772.5 H100"/></g><path d="M100.5 202 V218 M85 217.5 H100" stroke="#9a9a9a" stroke-width="1"/><path d="M89.5 203 V217 M85 207.5 H100" stroke="#aaa" stroke-width="1" stroke-dasharray="1 1"/><defs><clipPath id="hc"><rect x="100" y="200" width="1076" height="20"/></clipPath><clipPath id="vc"><rect x="84" y="218" width="17" height="561"/></clipPath></defs><g fill="#bcbcbc" font-family="Liberation Sans" font-size="10px" clip-path="url(#hc)"><text x="130.5" y="212.0">36</text><text x="180.5" y="212.0">30</text><text x="229.5" y="212.0">24</text><text x="279.5" y="212.0">18</text><text x="329.5" y="212.0">12</text><text x="379.5" y="212.0">6</text><text x="428.5" y="212.0">0</text><text x="478.5" y="212.0">6</text><text x="528.5" y="212.0">12</text><text x="578.5" y="212.0">18</text><text x="628.5" y="212.0">24</text><text x="678.5" y="212.0">30</text><text x="727.5" y="212.0">36</text><text x="777.5" y="212.0">42</text><text x="827.5" y="212.0">48</text><text x="877.5" y="212.0">54</text><text x="926.5" y="212.0">60</text><text x="976.5" y="212.0">66</text><text x="1026.5" y="212.0">72</text><text x="1076.5" y="212.0">78</text><text x="1126.5" y="212.0">84</text><text x="1176.5" y="212.0">90</text></g><g fill="#bcbcbc" font-family="Liberation Sans" font-size="9.5px" clip-path="url(#vc)"><text x="87" y="233.0">0</text><text x="87" y="283.0">6</text><text x="87" y="333.0">1</text><text x="87" y="341.5">2</text><text x="87" y="383.0">1</text><text x="87" y="391.5">8</text><text x="87" y="433.0">2</text><text x="87" y="441.5">4</text><text x="87" y="483.0">3</text><text x="87" y="491.5">0</text><text x="87" y="532.0">3</text><text x="87" y="540.5">6</text><text x="87" y="582.0">4</text><text x="87" y="590.5">2</text><text x="87" y="632.0">4</text><text x="87" y="640.5">8</text><text x="87" y="682.0">5</text><text x="87" y="690.5">4</text><text x="87" y="731.0">6</text><text x="87" y="739.5">0</text><text x="87" y="781.0">6</text><text x="87" y="789.5">6</text></g><path d="M640.5 203 V218" stroke="#ddd" stroke-dasharray="1 1"/><path d="M85 388.5 H100" stroke="#ddd" stroke-dasharray="1 1"/></svg>
<div class="a" style="left:1176px;top:202px;width:14px;height:577px;background:#2e2e2e"></div>
<div class="a" style="left:1177px;top:282px;width:14px;height:419px;background:#8d8d8d"></div>
<svg style="left:1179px;top:206px" width="10" height="6" viewBox="0 0 10 6"><path d="M0 6 H10 L5 0 Z" fill="#e0e0e0"/></svg>
<svg style="left:1180px;top:769px" width="9" height="5" viewBox="0 0 9 5"><path d="M0 0 H9 L4.5 5 Z" fill="#e0e0e0"/></svg>
<div class="a" style="left:1190px;top:183px;width:4px;height:612px;background:#262626"></div>
<div class="a" style="left:85px;top:779px;width:434px;height:15px;background:#3b3b3b"></div>
<div class="a" style="left:519px;top:779px;width:635px;height:15px;background:#2e2e2e"></div>
<div class="a" style="left:722px;top:779.5px;width:378px;height:14.5px;background:#8d8d8d"></div>
<div class="a" style="left:1154px;top:779px;width:36px;height:15px;background:#3b3b3b"></div>
<div class="a" style="left:50px;top:794px;width:1262px;height:1px;background:#222"></div><div class="a" style="left:50px;top:795px;width:1262px;height:3px;background:linear-gradient(#8e8e8e,#6a6a6a)"></div>
<div class="a" style="left:50px;top:779px;width:35px;height:15px;background:#3c3c3c"></div>
<div class="a" style="left:82px;top:183px;width:3px;height:611px;background:#252525"></div>
<div class="a" style="left:1194px;top:195px;width:137px;height:599px;background:#414141"></div>
<div class="a" style="left:1311px;top:777px;width:20px;height:21px;background:linear-gradient(135deg,transparent 50%,#2a2a2a 50%,#555 56%,#3c3c3c)"></div>
<!-- /WS1 -->
<!-- WS2 -->
<!-- page -->
<div class="a" style="left:426px;top:224px;width:425px;height:550px;background:#000"></div>
<div class="a" style="left:427px;top:225px;width:422px;height:547px;background:#fff"></div>
<div class="a" style="left:451px;top:249px;width:374px;height:499px;border:1px solid #b07ac0"></div>
<!-- blue rect -->
<div class="a" style="left:464px;top:425px;width:189px;height:215px;background:#1ba1e3"></div>
<!-- frames -->
<div class="a" style="left:665px;top:425px;width:149px;height:215px;border:1px solid #8499bd"></div>
<div class="a" style="left:464px;top:650px;width:350px;height:89px;border:1px solid #8499bd"></div>
<div class="a" style="left:464px;top:258px;width:350px;height:128px;border:1px solid #8499bd"></div>
<!-- TEXT1 -->
<svg style="left:0;top:0;z-index:1" width="1379" height="871" viewBox="0 0 1379 871"><g font-family="Liberation Serif" font-size="8.7px" fill="#0a0a0a" stroke="#0a0a0a" stroke-width="0.35">
<text x="464.5" y="264.60" textLength="338.4" lengthAdjust="spacingAndGlyphs">Ut esto invenimagni ipsunt etur re, odi bea sam, sam in repudis siniscium qui num con corest aboribus</text>
<text x="464.5" y="274.56" textLength="330.5" lengthAdjust="spacingAndGlyphs">repudandunt officil magnimus, ipsam venienis am, vitiis anisquodi re ped eaqui cum repudip suntiis</text>
<text x="464.5" y="284.52" textLength="345.4" lengthAdjust="spacingAndGlyphs">sitiament eos idus maios am dis estio evero officiasped qui ut fuga. Quisto officiisqui omnissi blant quam,</text>
<text x="464.5" y="294.48" textLength="335.8" lengthAdjust="spacingAndGlyphs">omnisto taestio nescid essimus, officab oresendam et apeleni hictissequi aut audae occaesequunt labor</text>
<text x="464.5" y="304.44" textLength="347.3" lengthAdjust="spacingAndGlyphs">restrum net velluptaqui sed quam inctur, nis corrum corest as as est et, conse volorepudit aut pelland ellu-</text>
<text x="464.5" y="314.40" textLength="347.3" lengthAdjust="spacingAndGlyphs">ment et apis dest inum fuga. Nam quunti volum cus re conserrum qui tet et quas ipsandamet ius volorum</text>
<text x="464.5" y="324.36" textLength="332.7" lengthAdjust="spacingAndGlyphs">rerumet essim inis estistia iumenist est harcipsa cusandae ent as autem laccull uptaquis cus, corere et</text>
<text x="464.5" y="334.32" textLength="291.2" lengthAdjust="spacingAndGlyphs">aceperum fuga. Et magnim quo ea anderis sinciument dolenim usandis aboriate pos dus.</text>
<text x="464.5" y="344.28" textLength="344.1" lengthAdjust="spacingAndGlyphs">Luptatur? Qui re, eosanih ilique venissiti dis aut omnis es exceribus expersp eristrunt, solorepra non cus,</text>
<text x="464.5" y="354.24" textLength="335.2" lengthAdjust="spacingAndGlyphs">occus, optas alique et ut dipsaniande es aboriatur, none il est que aped estiorescius expliquam enimus-</text>
<text x="464.5" y="364.20" textLength="340.0" lengthAdjust="spacingAndGlyphs">citis nobis dolorep udignimint, si a dernamendit eatquam, cum fuga. Xerunte nimil inctur sit, omnim et</text>
<text x="464.5" y="374.16" textLength="346.4" lengthAdjust="spacingAndGlyphs">ratque et veliquiatas et rectur sam, sapitium fugit, nos eaternod iorepe la percipsantis di beatior aut exped</text>
<text x="464.5" y="384.12" textLength="33.7" lengthAdjust="spacingAndGlyphs">maximint.</text>
<text x="665.5" y="432.20" textLength="146.5" lengthAdjust="spacingAndGlyphs">Sitia qui consequi delesequam, ut acea idian-</text>
<text x="665.5" y="442.16" textLength="145.9" lengthAdjust="spacingAndGlyphs">dae demquibus modi antis santo blabo. Nem</text>
<text x="665.5" y="452.12" textLength="146.5" lengthAdjust="spacingAndGlyphs">vellature optatia voluptae porem ra explisint.</text>
<text x="665.5" y="462.08" textLength="39.5" lengthAdjust="spacingAndGlyphs">fjfjdklj fdjklj</text>
</g></svg>
<!-- /TEXT1 -->
<!-- TEXT2 -->
<!-- handles -->
<svg style="left:0;top:0;z-index:2" width="1379" height="871" viewBox="0 0 1379 871"><g fill="#fff" stroke="#7a93bf" stroke-width="1">
<rect x="461" y="255.5" width="6" height="6"/><rect x="636" y="255.5" width="6" height="6"/><rect x="811" y="255.5" width="6" height="6"/>
<rect x="461" y="319.5" width="6" height="6"/><rect x="811" y="319.5" width="6" height="6"/>
<rect x="461" y="382.5" width="6" height="6"/><rect x="636" y="382.5" width="6" height="6"/><rect x="811" y="382.5" width="6" height="6"/>
<rect x="460.5" y="265.5" width="7" height="7"/><rect x="810.5" y="371.5" width="7" height="7"/>
</g><rect x="810.5" y="279.5" width="6.5" height="6.5" fill="#ede37a" stroke="#c8c070" stroke-width="1"/>
<path d="M812.5 373 L816 375 L812.5 377 Z" fill="#6f8fc4"/>
</svg>
<!-- tooltip -->
<div class="a" style="left:654px;top:378px;width:75px;height:34px;background:#8b8b8b;border-radius:3px;z-index:3"></div>
<div class="t" style="left:659px;top:384.5px;font-size:9.8px;color:#f4f4f4;line-height:13.5px;z-index:3;-webkit-text-stroke:0.35px #f4f4f4;letter-spacing:-0.2px">W: 42p1.5<br>H: 15p3</div>
<svg style="left:637px;top:378px;z-index:3" width="10" height="20" viewBox="0 0 10 20"><path d="M5 0.3 L10 6 H6.3 V14 H10 L5 19.7 L0 14 H3.7 V6 H0 Z" fill="#111" stroke="#fff" stroke-width="0.7"/></svg>

<!-- tools -->
<div class="a" style="left:55px;top:211px;width:24px;height:20px;background:#2c2c2c;border-radius:1px"></div>
<svg style="left:0;top:0;z-index:1" width="1379" height="871" viewBox="0 0 1379 871">
<g fill="none" stroke="#cdcdcd" stroke-width="1.2">
<path d="M62.5 213.5 V227 L65.5 224 L68 229 L70.5 228 L68 223 H72 Z"/>
</g>
<path d="M62 234 V248.5 L65.3 245.5 L68 250 L70.5 249 L67.8 244.5 H72 Z" fill="#c6c6c6"/>
<path d="M61 256.5 H68 L72.5 261 V271 H61 Z" fill="#bdbdbd"/><path d="M68 256.5 V261 H72.5" fill="#eee"/><path d="M70 263 V272 L72 270 L73.5 272.5 L75 271.5 L73.5 269 H76 Z" fill="#e6e6e6" stroke="#3c3c3c" stroke-width="0.6"/>
<g stroke="#c6c6c6" stroke-width="1.6" fill="none"><path d="M57.5 277 V292 M76.5 277 V292 M60 284.5 H74"/></g><path d="M59.5 284.5 L63.5 281 V288 Z M74.5 284.5 L70.5 281 V288 Z" fill="#c6c6c6"/>
<g stroke="#c6c6c6" stroke-width="1.4" fill="none"><path d="M60.5 302 V311.5 H76.5 V306"/><path d="M64 297 L70 302.5 M70 298.5 V302.5 H66"/></g><g fill="#c6c6c6"><rect x="63" y="306" width="2" height="2"/><rect x="67" y="306" width="2" height="2"/><rect x="71" y="306" width="2" height="2"/></g><path d="M75 313 H78 V310 Z" fill="#ccc"/>
<text x="61" y="342" font-family="Liberation Serif" font-size="20" fill="#c8c8c8">T</text><path d="M75 343 H78 V340 Z" fill="#ccc"/>
<path d="M60.5 361 L73 347.5" stroke="#c6c6c6" stroke-width="1.5"/>
<path d="M60 382 L62 372 L69 367.5 L74.5 373 L70 380 Z" fill="#c2c2c2"/><path d="M67.5 366 L70.5 363.5 L76 369 L73.5 372 Z" fill="#d0d0d0"/><path d="M60 382 L65.5 376.5" stroke="#3c3c3c" stroke-width="1"/><path d="M74 384 H77 V381 Z" fill="#ccc"/>
<path d="M59.5 404 L61.5 398 L71.5 388.5 L75 392 L65 402 Z" fill="#c0c0c0"/><path d="M59.5 404 L61 400 L63.5 402.5 Z" fill="#888"/><path d="M74 405 H77 V402 Z" fill="#ccc"/>
<g fill="none" stroke="#c6c6c6" stroke-width="1.5"><rect x="60.5" y="412" width="13" height="11.5"/><path d="M60.5 412 L73.5 423.5 M73.5 412 L60.5 423.5"/></g><path d="M74 425 H77 V422 Z" fill="#ccc"/>
<rect x="60.5" y="433" width="13" height="11.5" fill="#6a6a6a" stroke="#c6c6c6" stroke-width="1.5"/><path d="M74 446 H77 V443 Z" fill="#ccc"/>
<g fill="none" stroke="#c6c6c6" stroke-width="1.6"><circle cx="71" cy="462" r="2.7"/><circle cx="71" cy="470" r="2.7"/><path d="M59 461 L68.5 468 M59 471 L68.5 464"/></g>
<path d="M59 480.5 V493 L62 490 L64.5 494 L66.5 493 L64 489 H68 Z" fill="#c6c6c6"/><path d="M65 482.5 H75.5 V492.5 H69" fill="none" stroke="#c6c6c6" stroke-width="1.3" stroke-dasharray="2 1.5"/><path d="M74 496 H77 V493 Z" fill="#ccc"/>
<defs><linearGradient id="gr" x1="0" x2="1"><stop offset="0" stop-color="#222"/><stop offset="1" stop-color="#aaa"/></linearGradient></defs>
<rect x="59.5" y="503" width="15" height="11.5" fill="url(#gr)" stroke="#c6c6c6" stroke-width="1.3"/>
<rect x="59.5" y="524" width="15" height="11.5" fill="#555" stroke="#c6c6c6" stroke-width="1.3"/><g fill="#c0c0c0"><rect x="60" y="525" width="2" height="2"/><rect x="64" y="525" width="2" height="2"/><rect x="68" y="525" width="2" height="2"/><rect x="72" y="525" width="2" height="2"/><rect x="62" y="527" width="2" height="2"/><rect x="66" y="527" width="2" height="2"/><rect x="70" y="527" width="2" height="2"/></g>
<path d="M60.5 551 H74 V561 L70.5 564.5 H60.5 Z" fill="#c6c6c6"/><g stroke="#3c3c3c" stroke-width="1"><path d="M63 554.5 H71.5 M63 557 H71.5 M63 559.5 H68"/></g><path d="M74 561 L70.5 564.5 V561 Z" fill="#3c3c3c"/>
<path d="M58 586 L68.5 575.5 L71.5 578.5 L61 589" fill="none" stroke="#c6c6c6" stroke-width="1.2" stroke-dasharray="1.3 1"/><path d="M69 573 L73.5 570.5 L77 574 L74.5 578.5 Z" fill="#cfcfcf"/><rect x="61" y="583" width="12" height="4" fill="#3c3c3c" stroke="#c6c6c6" stroke-width="1"/><path d="M75 587 H78 V584 Z" fill="#ccc"/>
<path d="M59 600 L61 598.5 L63.5 602 V593.5 L65.5 593 L66 600 V591.5 H68 L68.5 600 V592.5 L70.5 593 L71 601 V595 L73 595.5 L73.5 603 L71 608 H64 Z" fill="#c8c8c8"/>
<circle cx="66" cy="618.5" r="5" fill="#6a6a6a" stroke="#c6c6c6" stroke-width="1.6"/><path d="M69.5 622 L75 627.5" stroke="#c6c6c6" stroke-width="2.2"/>
<rect x="66" y="646" width="10.5" height="11" fill="#fff" stroke="#ddd" stroke-width="0.5"/><rect x="68.5" y="648.5" width="5.5" height="6" fill="#b02030"/><path d="M66 657 L76.5 646" stroke="#b02030" stroke-width="1.6"/>
<rect x="57.5" y="638.5" width="11.5" height="11.5" fill="#fff" stroke="#ddd" stroke-width="0.5"/><path d="M57.5 650 L69 638.5" stroke="#b02030" stroke-width="1.8"/>
<path d="M71.5 639.5 Q75.5 639.5 75.5 643 M74 642 L75.5 643.5 L77 642 M71 638.5 L72.5 639.5 L71 641" fill="none" stroke="#ccc" stroke-width="0.9"/>
<rect x="60.5" y="661.5" width="7" height="7" fill="#111" stroke="#ccc" stroke-width="0.8"/><rect x="56.5" y="658.5" width="7" height="7" fill="#eee" stroke="#aaa" stroke-width="0.8"/><path d="M56.5 665.5 L63.5 658.5" stroke="#b02030" stroke-width="1"/>
</svg>
<div class="a" style="left:55px;top:671px;width:12px;height:11px;background:#2a2a2a"></div>
<div class="a" style="left:57px;top:673px;width:8px;height:7px;border:1px solid #bbb;background:#555"></div>
<div class="t" style="left:69px;top:671px;font-family:'Liberation Serif',serif;font-size:12px;color:#777">T</div>
<div class="a" style="left:55px;top:688px;width:23px;height:20px;background:#2b2b2b"></div>
<div class="a" style="left:61.5px;top:692.5px;width:12px;height:11px;background:#fff"></div>
<svg style="left:61.5px;top:692.5px;z-index:1" width="15" height="14" viewBox="0 0 15 14"><path d="M0.5 10.5 L11.5 0.5" stroke="#b02030" stroke-width="1.8"/><path d="M13 13 H16 V10 Z" fill="#ccc"/></svg>
<div class="a" style="left:55px;top:713px;width:23px;height:20px;background:#2b2b2b"></div>
<svg style="left:62px;top:718px;z-index:1" width="15" height="13" viewBox="0 0 15 13"><rect x="0.5" y="0.5" width="11" height="10" fill="#222" stroke="#cfcfcf" stroke-width="1"/><path d="M1 3 H11" stroke="#cfcfcf"/><rect x="3" y="5" width="4" height="2" fill="#eee"/><rect x="6" y="7" width="3.5" height="2" fill="#eee"/><path d="M12.5 12.5 H15 V10 Z" fill="#ccc"/></svg>

<!-- status bar contents -->
<svg style="left:0;top:0;z-index:1" width="1379" height="871" viewBox="0 0 1379 871">
<g fill="none" stroke="#c8c8c8" stroke-width="1.2"><path d="M104.5 784 V792.5 H115 V789"/><path d="M108 789 Q109 784.5 113 784.5 H115.5"/></g><path d="M114 781.5 L118 784.5 L114 787.5 Z" fill="#c8c8c8"/>
<path d="M128.5 782 V792 M136 782 L130 787 L136 792 Z M145.5 782 L140 787 L145.5 792 Z" fill="#777" stroke="#777"/>
<text x="158" y="791.5" font-family="Liberation Sans" font-size="10" fill="#ddd">1</text>
<path d="M238.5 784.5 H246 L242.3 789.5 Z" fill="#ddd"/>
<path d="M259 782 L264 787 L259 792 Z M270 782 L275 787 L270 792 Z M277.5 782 V792" fill="#666" stroke="#666"/>
<circle cx="293.5" cy="787" r="6.5" fill="#d8d8d8"/><path d="M290.5 782.5 H295 L297.5 785 V791.5 H290.5 Z" fill="#eee" stroke="#444" stroke-width="1"/><path d="M295 782.5 V785 H297.5" fill="none" stroke="#444" stroke-width="0.8"/><path d="M300 791.5 H303 L301.5 793 Z" fill="#ddd"/>
<text x="313" y="791" font-family="Liberation Sans" font-size="9.5" fill="#a8a8a8" textLength="67.5" lengthAdjust="spacingAndGlyphs">[Basic] (working)</text>
<path d="M417 785 H424.5 L420.8 790 Z" fill="#ddd"/>
<circle cx="438.5" cy="788" r="5.5" fill="#4aa83a"/><circle cx="437.5" cy="786.5" r="3" fill="#6cc25a" opacity=".6"/>
<text x="447.5" y="791.5" font-family="Liberation Sans" font-size="10" fill="#c4c4c4" textLength="38" lengthAdjust="spacingAndGlyphs">No errors</text>
<path d="M509 785.5 H515.5 L512.3 789 Z" fill="#ddd"/>
<path d="M531 782 V793 L525 787.5 Z" fill="#e0e0e0"/>
<path d="M1142.5 782 V793 L1148.5 787.5 Z" fill="#e0e0e0"/>
<rect x="1159.5" y="782.5" width="14.5" height="10.5" fill="none" stroke="#d0d0d0" stroke-width="1.2"/><path d="M1166.8 782.5 V793" stroke="#d0d0d0" stroke-width="1.2"/>
<g fill="#aaa"><circle cx="1188" cy="783" r=".6"/><circle cx="1188" cy="786" r=".6"/><circle cx="1185" cy="786" r=".6"/><circle cx="1188" cy="789" r=".6"/><circle cx="1185" cy="789" r=".6"/><circle cx="1182" cy="789" r=".6"/><circle cx="1188" cy="792" r=".6"/><circle cx="1185" cy="792" r=".6"/><circle cx="1182" cy="792" r=".6"/><circle cx="1179" cy="792" r=".6"/></g>
</svg>
<!-- DOCK -->
<div class="a" style="left:1194px;top:291px;width:137px;height:1px;background:#2a2a2a"></div>
<div class="a" style="left:1194px;top:360px;width:137px;height:1px;background:#2a2a2a"></div>
<div class="a" style="left:1194px;top:430px;width:137px;height:1px;background:#2a2a2a"></div>
<div class="a" style="left:1252px;top:197px;width:20px;height:4px;background:repeating-linear-gradient(90deg,#151515 0 1px,transparent 1px 2px)"></div>
<div class="a" style="left:1252px;top:295px;width:20px;height:4px;background:repeating-linear-gradient(90deg,#151515 0 1px,transparent 1px 2px)"></div>
<div class="a" style="left:1252px;top:365px;width:20px;height:4px;background:repeating-linear-gradient(90deg,#151515 0 1px,transparent 1px 2px)"></div>
<div class="a" style="left:1198px;top:373px;width:130px;height:23px;background:#2e2e2e;border-radius:3px"></div>
<div class="t" style="left:1231px;top:214.5px;font-size:10.5px;font-weight:bold;color:#e4e4e4">Pages</div>
<div class="t" style="left:1231px;top:242.5px;font-size:10.5px;font-weight:bold;color:#e4e4e4">Layers</div>
<div class="t" style="left:1231px;top:270.5px;font-size:10.5px;font-weight:bold;color:#e4e4e4">Links</div>
<div class="t" style="left:1231px;top:312.0px;font-size:10.5px;font-weight:bold;color:#e4e4e4">Stroke</div>
<div class="t" style="left:1231px;top:340.0px;font-size:10.5px;font-weight:bold;color:#e4e4e4">Color</div>
<div class="t" style="left:1231px;top:381.0px;font-size:10.5px;font-weight:bold;color:#e4e4e4">Swatches</div>
<div class="t" style="left:1231px;top:409.0px;font-size:10.5px;font-weight:bold;color:#e4e4e4">CC Libraries</div>
<svg style="left:0;top:0;z-index:1" width="1379" height="871" viewBox="0 0 1379 871">
<g fill="#cfcfcf"><path d="M1205 214 L1207.5 212 H1212.5 V226 H1205 Z M1214.5 212 H1219.5 L1222 214 V226 H1214.5 Z"/></g><path d="M1213.5 209.5 V228" stroke="#e6e6e6" stroke-width="1"/><path d="M1207 212 L1205 214 H1207 Z M1220 212 L1222 214 H1220 Z" fill="#434343"/>
<path d="M1213.5 238.5 L1222 243.5 L1213.5 248.5 L1205 243.5 Z" fill="#cfcfcf"/><path d="M1205 247 L1213.5 252 L1222 247 V249.5 L1213.5 254.5 L1205 249.5 Z" fill="#cfcfcf"/>
<g fill="none" stroke="#cfcfcf" stroke-width="1.8"><path d="M1211.5 271 H1209 A3.5 3.5 0 0 0 1209 278 H1211.5 M1215.5 271 H1218 A3.5 3.5 0 0 1 1218 278 H1215.5 M1209.5 274.5 H1217.5"/></g>
<g fill="#d0d0d0"><rect x="1205" y="309" width="17" height="2"/><rect x="1205" y="314" width="17" height="2"/><rect x="1205" y="319" width="17" height="2.5"/></g>
<path d="M1213.5 336.5 C1206 336.5 1203.5 341 1204 344.5 C1204.5 348 1208 350 1214 350 C1220 350 1223 347.5 1223 344 C1223 338.5 1219 336.5 1213.5 336.5 Z" fill="#cfcfcf"/><g fill="#434343"><circle cx="1208.5" cy="344" r="1.3"/><circle cx="1212" cy="347" r="1.3"/><circle cx="1216" cy="346.5" r="1.3"/><circle cx="1219.5" cy="342.5" r="1.3"/><circle cx="1215.5" cy="340.5" r="1.5"/></g>
<g fill="none" stroke="#d6d6d6" stroke-width="1.2"><rect x="1205.5" y="379.5" width="16" height="12"/><path d="M1210.8 379.5 V391.5 M1216.2 379.5 V391.5 M1205.5 385.5 H1221.5"/></g><rect x="1206" y="380" width="4.5" height="5" fill="#222"/>
<g fill="none" stroke="#cfcfcf" stroke-width="1.6"><circle cx="1209.5" cy="415" r="5"/><circle cx="1217.5" cy="415" r="5"/><circle cx="1213.5" cy="411.5" r="4"/></g>
</svg>

<!-- swatches panel -->
<div class="a" style="left:983px;top:358px;width:209px;height:195px;background:#3b3b3b;box-shadow:0 0 0 1px #1e1e1e;z-index:4;border-top:4px solid #1b1b1b"></div>
<div class="a" style="left:984px;top:362px;width:207px;height:17px;background:#2c2c2c;z-index:4"></div>
<div class="a" style="left:984px;top:362px;width:67px;height:17px;background:#3b3b3b;z-index:4"></div>
<div class="a" style="left:1051px;top:362px;width:76px;height:17px;background:#333;z-index:4;border-right:1px solid #262626"></div>
<div class="t" style="left:997px;top:365.5px;font-size:10.6px;font-weight:bold;color:#e2e2e2;z-index:4">Swatches</div>
<div class="t" style="left:1058px;top:365.5px;font-size:10.6px;font-weight:bold;color:#a0a0a0;z-index:4">CC Libraries</div>
<div class="a" style="left:984px;top:403px;width:207px;height:1px;background:#2a2a2a;z-index:4"></div>
<div class="a" style="left:984px;top:404px;width:195px;height:121px;background:#3e3e3e;z-index:4"></div>
<div class="a" style="left:984px;top:405px;width:195px;height:19px;background:#4b5a72;z-index:4"></div>
<div class="a" style="left:1179px;top:404px;width:13px;height:122px;background:#2c2c2c;z-index:4"></div>
<div class="a" style="left:1180px;top:421px;width:11px;height:54px;background:#8c8c8c;z-index:4"></div>
<div class="a" style="left:984px;top:526px;width:207px;height:19px;background:#3b3b3b;z-index:4;border-top:1px solid #2a2a2a"></div>
<div class="a" style="left:984px;top:545px;width:207px;height:8px;background:#333;z-index:4;border-top:1px solid #2a2a2a"></div>
<div class="a" style="left:1078px;top:547px;width:20px;height:3px;background:repeating-linear-gradient(90deg,#111 0 1px,transparent 1px 2px);z-index:5"></div>
<svg style="left:0;top:0;z-index:5" width="1379" height="871" viewBox="0 0 1379 871">
<path d="M986.5 370 L989 367 L991.5 370 M986.5 372.5 L989 375.5 L991.5 372.5" fill="none" stroke="#bbb" stroke-width="1"/>
<path d="M1151 366.5 L1155 370.5 L1151 374.5 Z M1156 366.5 L1160 370.5 L1156 374.5 Z" fill="#d6d6d6"/>
<path d="M1167.5 366 V376 M1169.5 366 V376" stroke="#555"/>
<path d="M1174 369 H1179 L1176.5 372 Z" fill="#cfcfcf"/><g stroke="#cfcfcf" stroke-width="1"><path d="M1180 367 H1188 M1180 369.5 H1188 M1180 372 H1188 M1180 374.5 H1188"/></g>
<g fill="none" stroke="#2a2a2a" stroke-width="1" stroke-dasharray="0.5 0.5"><path d="M984 379 H1192"/></g>
<rect x="990.5" y="382.5" width="11" height="11" fill="#fff" stroke="#999" stroke-width="0.5"/><path d="M990.5 393.5 L1001.5 382.5" stroke="#b02030" stroke-width="1.8"/>
<rect x="997.5" y="389.5" width="10" height="10" fill="#fff" stroke="#aaa" stroke-width="0.6"/><rect x="999.5" y="391.5" width="6" height="6" fill="#a81e2a"/><path d="M997.5 399.5 L1007.5 389.5" stroke="#b02030" stroke-width="1.6"/>
<path d="M1003 383 Q1007 383 1007 387 M1005.5 386 L1007 387.5 L1008.5 386" fill="none" stroke="#ccc" stroke-width="0.8"/>
<rect x="1021.5" y="386.5" width="11" height="11" fill="#232323" stroke="#232323"/><rect x="1023.5" y="388.5" width="7" height="7" fill="#555" stroke="#bbb" stroke-width="1"/>
<text x="1036" y="397.5" font-family="Liberation Serif" font-size="13" fill="#7a7a7a">T</text>
<text x="1094" y="396.5" font-family="Liberation Sans" font-size="9.5" fill="#cfcfcf">Tint:</text>
<rect x="1116" y="386" width="43" height="12" fill="#303030"/><rect x="1117" y="387" width="25" height="10" fill="#a8a8a8"/><path d="M1149 389 L1153 392 L1149 395 Z" fill="#555"/>
<text x="1161" y="397" font-family="Liberation Sans" font-size="9.5" fill="#cfcfcf">%</text>
<g stroke="#2d2d2d" stroke-width="1"><path d="M984 424.5 H1179 M984 444.5 H1179 M984 464.5 H1179 M984 484.5 H1179 M984 504.5 H1179"/></g>
<rect x="999.5" y="408.5" width="13" height="13" fill="#fff" stroke="#222" stroke-width="1"/><path d="M1000 421 L1012 409" stroke="#b02030" stroke-width="1.8"/>
<rect x="999.5" y="428.5" width="13" height="13" fill="#000"/>
<rect x="999.5" y="448.5" width="13" height="13" fill="#fff" stroke="#222" stroke-width="1"/>
<rect x="999.5" y="468.5" width="13" height="13" fill="#000"/>
<rect x="999.5" y="488.5" width="13" height="13" fill="#1ba1e3" stroke="#10204a" stroke-width="1"/>
<rect x="999.5" y="508.5" width="13" height="13" fill="#e5137f" stroke="#401020" stroke-width="1"/>
<g font-family="Liberation Sans" font-size="9.5" fill="#bdbdbd">
<text x="1014.5" y="419" fill="#f0f0f0" font-weight="bold">[None]</text>
<text x="1014.5" y="439.5" fill="#a8a8a8">[Registration]</text>
<text x="1014.5" y="459.5" fill="#a8a8a8">[Paper]</text>
<text x="1014.5" y="479.5" fill="#a8a8a8">[Black]</text>
<text x="1014.5" y="499.5" fill="#d0d0d0">C=100 M=0 Y=0 K=0</text>
<text x="1014.5" y="519.5" fill="#d0d0d0">C=0 M=100 Y=0 K=0</text>
</g>
<g id="pen" fill="none" stroke="#cfcfcf" stroke-width="1"><path d="M1131.5 410 L1142 420.5 M1142 410 L1131.5 420.5"/></g><circle cx="1141" cy="411" r="1.5" fill="#cfcfcf"/>
<use href="#pen" y="20"/><circle cx="1141" cy="431" r="1.5" fill="#cfcfcf"/>
<use href="#pen" y="60"/><circle cx="1141" cy="471" r="1.5" fill="#cfcfcf"/>
<rect x="1162.5" y="409.5" width="11" height="11" fill="#f2dde0" stroke="#aaa" stroke-width="0.5"/><path d="M1163 420.5 L1173.5 410" stroke="#c03040" stroke-width="1.3"/>
<rect x="1162.5" y="429.5" width="11" height="11" fill="#c8c8c8"/><circle cx="1168" cy="435" r="3.5" fill="none" stroke="#333" stroke-width="1"/><path d="M1164 435 H1172 M1168 431 V439" stroke="#333" stroke-width="0.8"/>
<g id="cm"><rect x="1146.5" y="470" width="11" height="11" fill="#888" stroke="#ddd" stroke-width="1" stroke-dasharray="1 0.6"/><rect x="1162.5" y="470" width="11" height="11" fill="#eee"/><path d="M1163 470.5 L1168 475.5 L1173 470.5 Z" fill="#a24fa6"/><path d="M1163 470.5 L1168 475.5 L1163 480.5 Z" fill="#2bb4e8"/><path d="M1173 470.5 L1168 475.5 L1173 480.5 Z" fill="#e8d84a"/><path d="M1163 480.5 L1168 475.5 L1173 480.5 Z" fill="#111"/></g>
<use href="#cm" y="20"/><use href="#cm" y="40"/>
<path d="M1181 415 H1189 L1185 410 Z" fill="#dedede"/><path d="M1181 516 H1189 L1185 521 Z" fill="#dedede"/>
<path d="M993 539.5 A3 3 0 0 1 996 534.5 A4 4 0 0 1 1003 534 A3 3 0 0 1 1006 539.5 Z" fill="#777"/><path d="M997 537 H1002 M1000.5 535.5 L1002 537 L1000.5 538.5" stroke="#3b3b3b" fill="none" stroke-width="0.8"/>
<g fill="none" stroke="#cfcfcf" stroke-width="0.8"><rect x="1062.5" y="530.5" width="8" height="8"/><path d="M1065 530.5 V538.5 M1068 530.5 V538.5 M1062.5 533 H1070.5 M1062.5 536 H1070.5"/></g><path d="M1072 539 H1076 L1074 541 Z" fill="#cfcfcf"/>
<path d="M1094.5 531 H1099 L1100.5 532.5 H1106 V540 H1094.5 Z" fill="#c8c8c8"/>
<path d="M1125.5 531 H1135.5 V540 H1129 V534.5 H1125.5 Z" fill="#666"/><path d="M1125.5 535.5 H1128 V540 Z" fill="#666"/>
<g fill="none" stroke="#666" stroke-width="1"><path d="M1154.5 532.5 H1165.5 M1157.5 532.5 V531 H1162.5 V532.5 M1155.5 533.5 L1156.5 540.5 H1163.5 L1164.5 533.5 M1158.5 534.5 V539.5 M1160 534.5 V539.5 M1161.5 534.5 V539.5"/></g>
<g fill="#777"><circle cx="1189" cy="533" r=".5"/><circle cx="1189" cy="536" r=".5"/><circle cx="1186" cy="536" r=".5"/><circle cx="1189" cy="539" r=".5"/><circle cx="1186" cy="539" r=".5"/><circle cx="1183" cy="539" r=".5"/><circle cx="1189" cy="542" r=".5"/><circle cx="1186" cy="542" r=".5"/><circle cx="1183" cy="542" r=".5"/><circle cx="1180" cy="542" r=".5"/></g>
</svg>

<!-- /DOCK -->

<!-- /WS2 -->

</body></html>
